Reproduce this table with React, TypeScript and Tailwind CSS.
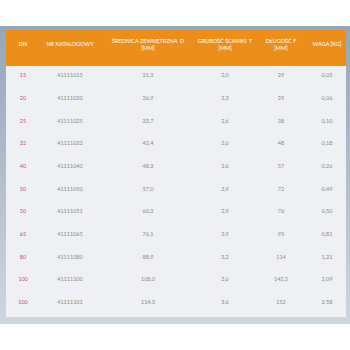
import React from "react";

const rows = [
  ["15", "41111015", "21,3", "2,0", "29", "0,05"],
  ["20", "41111020", "26,9", "2,3", "29", "0,06"],
  ["25", "41111025", "33,7", "2,6", "38", "0,10"],
  ["32", "41111032", "42,4", "2,6", "48", "0,18"],
  ["40", "41111040", "48,3", "2,6", "57", "0,26"],
  ["50", "41111050", "57,0", "2,9", "72", "0,49"],
  ["50", "41111051", "60,3", "2,9", "76", "0,50"],
  ["65", "41111065", "76,1", "2,9", "95", "0,81"],
  ["80", "41111080", "88,9", "3,2", "114", "1,21"],
  ["100", "41111100", "108,0", "3,6", "142,5", "2,09"],
  ["100", "41111101", "114,3", "3,6", "152", "2,58"],
];

const grid = "grid grid-cols-[34px_60px_96px_58px_54px_38px]";

export default function App() {
  return (
    <div className="w-[350px] h-[350px] bg-white pt-[26px] font-['Lato',sans-serif]">
      <div className="h-[298px] bg-gradient-to-b from-[#97a5b9] to-[#cfd6e0] pl-[6px] pr-[4px] pt-[4px] pb-[7px]">
        <div className="bg-[#eff0f4] h-full">
          <div className={`${grid} h-[36px] bg-[#ec8f1a] text-white text-[5.5px] leading-[7px] uppercase pb-[7px]`}>
            <div className="flex items-center justify-center text-center">DN</div>
            <div className="flex items-center justify-center text-center">NR KATALOGOWY</div>
            <div className="flex items-center justify-center text-center">ŚREDNICA ZEWNĘTRZNA&nbsp; D<br />[MM]</div>
            <div className="flex items-center justify-center text-center">GRUBOŚĆ ŚCIANKI&nbsp; T<br />[MM]</div>
            <div className="flex items-center justify-center text-center">DŁUGOŚĆ F<br />[MM]</div>
            <div className="flex items-center justify-center text-center">WAGA [KG]</div>
          </div>
          {rows.map((r, i) => (
            <div key={i} className={`${grid} h-[22.7px] text-[5.5px] text-[#8a8a8a] pb-[4px]`}>
              {r.map((c, j) => (
                <div key={j} className={`flex items-center justify-center ${j === 0 ? "text-[#c9534f]" : ""}`}>
                  {c}
                </div>
              ))}
            </div>
          ))}
        </div>
      </div>
    </div>
  );
}
